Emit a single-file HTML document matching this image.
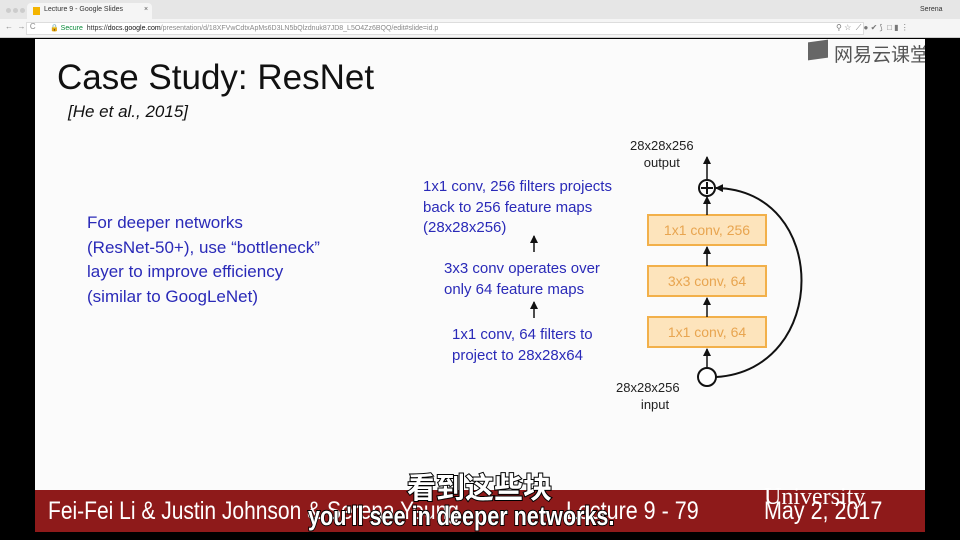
<!DOCTYPE html>
<html><head><meta charset="utf-8"><style>
*{margin:0;padding:0;box-sizing:border-box}
body{width:960px;height:540px;background:#000;position:relative;overflow:hidden;font-family:"Liberation Sans",Arial,sans-serif}
.t{position:absolute;white-space:nowrap}
</style></head><body>
<div style="position:absolute;left:0;top:0;width:960px;height:19px;background:#e6e6e6"></div>
<div style="position:absolute;left:27px;top:3px;width:125px;height:16px;background:#f5f5f5;border-radius:4px 4px 0 0"></div>
<div style="position:absolute;left:33px;top:7px;width:7px;height:8px;background:#f4b400"></div>
<div class="t" style="left:44px;top:6px;font-size:7px;color:#333">Lecture 9 - Google Slides</div>
<div class="t" style="left:144px;top:6px;font-size:7px;color:#555">×</div>
<div style="position:absolute;left:6px;top:8px;width:5px;height:5px;border-radius:50%;background:#ccc;box-shadow:7px 0 #ccc,14px 0 #ccc"></div>
<div class="t" style="left:920px;top:6px;font-size:7px;color:#333">Serena</div>
<div style="position:absolute;left:0;top:19px;width:960px;height:19px;background:#f5f5f5;border-bottom:1px solid #ccc"></div>
<div style="position:absolute;left:26px;top:22px;width:838px;height:13px;background:#fff;border:1px solid #ddd"></div>
<div class="t" style="left:5px;top:22px;font-size:8px;color:#888">←&nbsp;&nbsp;→&nbsp;&nbsp;C</div>
<div class="t" style="left:50px;top:24px;font-size:7px;color:#0a8a3a">🔒 Secure&nbsp;&nbsp;<span style="color:#333">https://<b style="font-weight:normal;color:#111">docs.google.com</b></span><span style="color:#888">/presentation/d/18XFVwCdtxApMs6D3LN5bQlzdnuk87JD8_L5O4Zz6BQQ/edit#slide=id.p</span></div>
<div class="t" style="left:836px;top:23px;font-size:8px;color:#777">⚲ ☆ &nbsp;⟋ ● ✔ ⟆ &nbsp;□ ▮ ⋮</div>
<div style="position:absolute;left:35px;top:39px;width:890px;height:451px;background:#fbfbfb"></div>
<div style="position:absolute;left:35px;top:490px;width:890px;height:42px;background:#8e1a1a"></div>
<div style="position:absolute;left:808px;top:41px;width:20px;height:18px;background:#666;transform:skewY(-8deg)"></div>
<div class="t" style="left:834px;top:40px;font-size:19px;color:#555;font-family:'Noto Sans CJK SC',sans-serif">网易云课堂</div>
<div style="position:absolute;left:925px;top:39px;width:35px;height:501px;background:#000"></div>
<div class="t" style="left:57px;top:58px;font-size:35px;color:#111">Case Study: ResNet</div>
<div class="t" style="left:68px;top:102px;font-size:17px;color:#111;font-style:italic">[He et al., 2015]</div>
<div class="t" style="left:87px;top:211px;font-size:17px;color:#2a2ab8;line-height:24.5px">For deeper networks<br>(ResNet-50+), use “bottleneck”<br>layer to improve efficiency<br>(similar to GoogLeNet)</div>
<div class="t" style="left:423px;top:177px;font-size:15px;color:#2a2ab8;line-height:20.5px">1x1 conv, 256 filters projects<br>back to 256 feature maps<br>(28x28x256)</div>
<div class="t" style="left:444px;top:259px;font-size:15px;color:#2a2ab8;line-height:20.5px">3x3 conv operates over<br>only 64 feature maps</div>
<div class="t" style="left:452px;top:325px;font-size:15px;color:#2a2ab8;line-height:20.5px">1x1 conv, 64 filters to<br>project to 28x28x64</div>
<div class="t" style="left:630px;top:137px;font-size:13px;color:#222;line-height:17px;text-align:center">28x28x256<br>output</div>
<div class="t" style="left:616px;top:379px;font-size:13px;color:#222;line-height:17px;text-align:center">28x28x256<br>&nbsp;&nbsp;&nbsp;&nbsp;input</div>
<svg style="position:absolute;left:0;top:0" width="960" height="540">
<defs><marker id="a" markerUnits="userSpaceOnUse" markerWidth="8" markerHeight="8" refX="7" refY="4" orient="auto"><path d="M0,0 L8,4 L0,8z" fill="#111"/></marker></defs>
<g fill="#fde4bc" stroke="#f2b04a" stroke-width="2">
<rect x="648" y="215" width="118" height="30"/><rect x="648" y="266" width="118" height="30"/><rect x="648" y="317" width="118" height="30"/></g>
<g fill="#e8a550" font-family="Liberation Sans" font-size="14" text-anchor="middle">
<text x="707" y="235">1x1 conv, 256</text><text x="707" y="286">3x3 conv, 64</text><text x="707" y="337">1x1 conv, 64</text></g>
<g stroke="#111" stroke-width="1.5" fill="none">
<line x1="707" y1="368" x2="707" y2="349" marker-end="url(#a)"/>
<line x1="707" y1="317" x2="707" y2="298" marker-end="url(#a)"/>
<line x1="707" y1="266" x2="707" y2="247" marker-end="url(#a)"/>
<line x1="707" y1="215" x2="707" y2="197" marker-end="url(#a)"/>
<line x1="707" y1="180" x2="707" y2="157" marker-end="url(#a)"/>
<line x1="534" y1="252" x2="534" y2="236" marker-end="url(#a)"/>
<line x1="534" y1="318" x2="534" y2="302" marker-end="url(#a)"/>
<circle cx="707" cy="377" r="9" fill="#fff" stroke-width="2"/>
<circle cx="707" cy="188" r="8" stroke-width="2"/>
<path d="M701,188 H713 M707,182 V194" stroke-width="2"/>
<path d="M716,377 C830,370 830,190 716,188" stroke-width="2" marker-end="url(#a)"/>
</g></svg>
<div class="t" style="left:48px;top:497px;font-size:25px;color:#fff;transform:scaleX(.84);transform-origin:left">Fei-Fei Li &amp; Justin Johnson &amp; Serena Yeung</div>
<div class="t" style="left:566px;top:497px;font-size:25px;color:#fff;transform:scaleX(.86);transform-origin:left">Lecture 9 - 79</div>
<div class="t" style="left:764px;top:497px;font-size:25px;color:#fff;transform:scaleX(.86);transform-origin:left">May 2, 2017</div>
<div class="t" style="left:764px;top:484px;font-size:24px;color:#fff;font-family:'Liberation Serif',serif">University</div>
<div class="t" style="left:407px;top:465px;font-size:29px;color:#fff;font-weight:bold;font-family:'Noto Sans CJK SC',sans-serif;-webkit-text-stroke:2px #000;paint-order:stroke">看到这些块</div>
<div class="t" style="left:308px;top:501px;font-size:27px;color:#fff;font-weight:bold;-webkit-text-stroke:2px #000;paint-order:stroke;transform:scaleX(.8);transform-origin:left">you'll see in deeper networks.</div>
</body></html>
